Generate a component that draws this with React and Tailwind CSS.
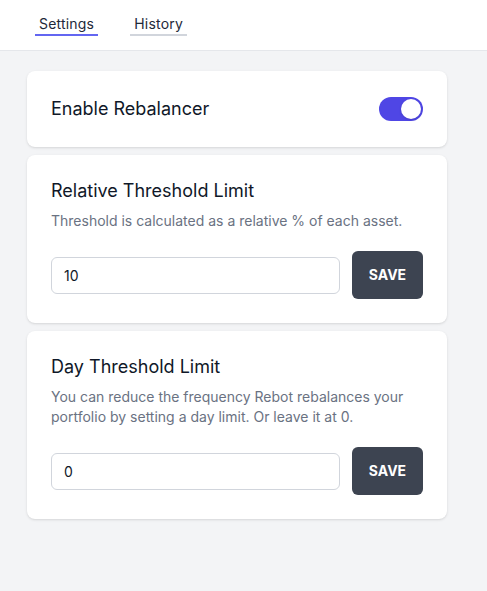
import { useState } from 'react';

function ThresholdCard({ title, description, value }) {
    const [val, setVal] = useState(value);
    return (
        <div className="bg-white rounded-lg shadow p-6">
            <h2 className="text-lg leading-6 text-gray-900">{title}</h2>
            <p className="mt-2 text-sm text-gray-500">{description}</p>
            <div className="mt-5 flex items-center gap-3">
                <input
                    type="text"
                    value={val}
                    onChange={e => setVal(e.target.value)}
                    className="flex-1 min-w-0 h-[37px] px-3 text-sm text-gray-900 border border-gray-300 rounded-md outline-none"
                />
                <button className="w-[71px] h-12 rounded-md bg-[#3d4451] text-white text-sm font-bold uppercase">
                    Save
                </button>
            </div>
        </div>
    );
}

export default function App() {
    const [tab, setTab] = useState('settings');
    const [enabled, setEnabled] = useState(true);

    return (
        <div className="min-h-screen bg-gray-100 font-['Inter',sans-serif]">
            <div className="h-[51px] bg-white border-b border-gray-200 flex gap-8 px-[35px] pt-[14px]">
                <button
                    onClick={() => setTab('settings')}
                    className={`h-[22px] px-1 text-sm leading-5 tracking-[0.2px] text-gray-800 border-b-2 ${tab === 'settings' ? 'border-[#6366f1]' : 'border-gray-300'}`}
                >
                    Settings
                </button>
                <button
                    onClick={() => setTab('history')}
                    className={`h-[22px] px-1 text-sm leading-5 tracking-[0.2px] text-gray-800 border-b-2 ${tab === 'history' ? 'border-[#6366f1]' : 'border-gray-300'}`}
                >
                    History
                </button>
            </div>

            <div className="ml-[27px] w-[420px] pt-5 space-y-2">
                <div className="bg-white rounded-lg shadow p-6 flex items-center justify-between">
                    <span className="text-lg leading-7 text-gray-900">Enable Rebalancer</span>
                    <button
                        onClick={() => setEnabled(!enabled)}
                        className={`w-11 h-6 rounded-full p-0.5 flex items-center transition ${enabled ? 'bg-[#4f46e5] justify-end' : 'bg-gray-200 justify-start'}`}
                    >
                        <span className="w-5 h-5 rounded-full bg-white shadow-sm"></span>
                    </button>
                </div>

                <ThresholdCard
                    title="Relative Threshold Limit"
                    description="Threshold is calculated as a relative % of each asset."
                    value="10"
                />
                <ThresholdCard
                    title="Day Threshold Limit"
                    description="You can reduce the frequency Rebot rebalances your portfolio by setting a day limit. Or leave it at 0."
                    value="0"
                />
            </div>
        </div>
    );
}
